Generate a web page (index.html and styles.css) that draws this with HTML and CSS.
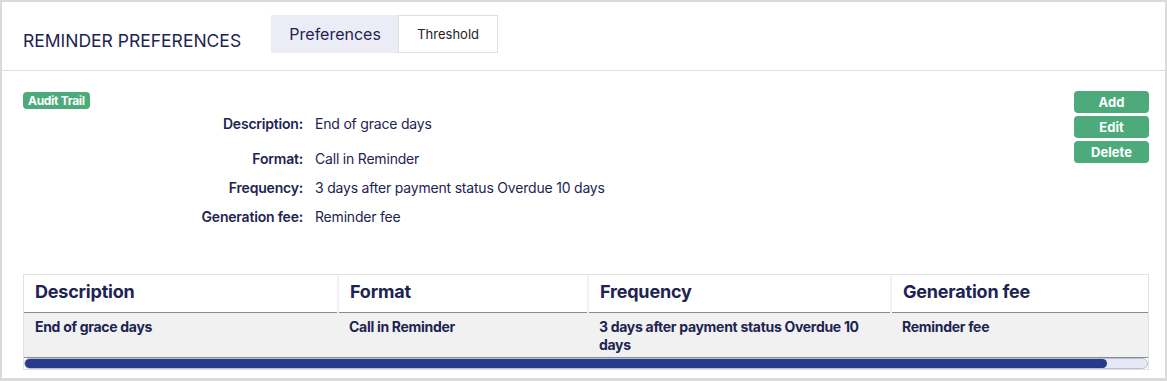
FILE: index.html
```html
<!DOCTYPE html>
<html lang="en">
<head>
    <meta charset="UTF-8">
    <meta name="viewport" content="width=device-width, initial-scale=1.0">
    <title>Reminder Preferences</title>
    <link rel="stylesheet" href="styles.css">
</head>
<body>
    <div class="panel">
        <div class="panel-header">
            <h2 class="panel-title">REMINDER PREFERENCES</h2>
            <div class="tabs">
                <div class="tab tab-active">Preferences</div>
                <div class="tab tab-small">Threshold</div>
            </div>
        </div>

        <div class="panel-body">
            <div class="top-row">
                <div class="details">
                    <span class="badge">Audit Trail</span>
                    <div class="detail-list">
                        <div class="detail-row first">
                            <span class="detail-label">Description:</span>
                            <span class="detail-value">End of grace days</span>
                        </div>
                        <div class="detail-row">
                            <span class="detail-label">Format:</span>
                            <span class="detail-value">Call in Reminder</span>
                        </div>
                        <div class="detail-row">
                            <span class="detail-label">Frequency:</span>
                            <span class="detail-value">3 days after payment status Overdue 10 days</span>
                        </div>
                        <div class="detail-row">
                            <span class="detail-label">Generation fee:</span>
                            <span class="detail-value">Reminder fee</span>
                        </div>
                    </div>
                </div>
                <div class="actions">
                    <button class="btn">Add</button>
                    <button class="btn">Edit</button>
                    <button class="btn">Delete</button>
                </div>
            </div>

            <div class="table-wrap">
                <table class="grid">
                    <thead>
                        <tr>
                            <th class="col-desc">Description</th>
                            <th class="col-format">Format</th>
                            <th class="col-freq">Frequency</th>
                            <th class="col-fee">Generation fee</th>
                        </tr>
                    </thead>
                    <tbody>
                        <tr>
                            <td>End of grace days</td>
                            <td>Call in Reminder</td>
                            <td>3 days after payment status Overdue 10 days</td>
                            <td>Reminder fee</td>
                        </tr>
                    </tbody>
                </table>
                <div class="scrollbar">
                    <div class="scroll-thumb"></div>
                </div>
            </div>
        </div>
    </div>
</body>
</html>
```

FILE: styles.css
```css
* {
    box-sizing: border-box;
}
body {
    margin: 0;
    font-family: Inter, "Noto Sans", Arial, sans-serif;
    color: #1d2451;
    background-color: white;
}
.panel {
    width: 1167px;
    height: 381px;
    border: 2px solid #dadada;
    border-bottom-width: 3px;
    background-color: white;
}
.panel-header {
    display: flex;
    align-items: flex-start;
    height: 69px;
    padding: 0 21px;
    border-bottom: 1px solid #dddddd;
}
.panel-title {
    margin: 29px 0 0 0;
    font-size: 17.5px;
    font-weight: 400;
    line-height: 20px;
    letter-spacing: 0;
}
.tabs {
    display: flex;
    margin: 13px 0 0 30px;
}
.tab {
    height: 38px;
    display: flex;
    align-items: center;
    justify-content: center;
    border: 1px solid #dedede;
    font-size: 16px;
    background-color: white;
}
.tab-active {
    width: 127px;
    background-color: #ebecf5;
    border-right: none;
    border-color: #ebecf5;
}
.tab-small {
    width: 100px;
    font-size: 13px;
    color: #222;
}
.panel-body {
    padding: 20px 16px 0 21px;
}
.top-row {
    display: flex;
    justify-content: space-between;
}
.badge {
    display: block;
    width: fit-content;
    margin-top: 1px;
    height: 17px;
    line-height: 17px;
    padding: 0 5px;
    border-radius: 4px;
    background-color: #4caa7b;
    color: white;
    font-size: 12px;
    font-weight: 700;
    letter-spacing: -0.3px;
}
.detail-row {
    display: flex;
    height: 29px;
    align-items: center;
    font-size: 14px;
}
.detail-row.first {
    margin-bottom: 6px;
}
.detail-label {
    width: 280px;
    text-align: right;
    font-weight: 600;
    letter-spacing: -0.2px;
}
.detail-value {
    margin-left: 12px;
    letter-spacing: -0.2px;
}
.actions {
    display: flex;
    flex-direction: column;
    gap: 3px;
}
.btn {
    width: 75px;
    height: 22px;
    padding: 0;
    border: none;
    border-radius: 4px;
    background-color: #4caa7b;
    color: white;
    font-family: inherit;
    font-size: 13px;
    font-weight: 700;
}
.table-wrap {
    margin-top: 43px;
    width: 1126px;
    border: 1px solid #e2e2e2;
}
.grid {
    width: 100%;
    border-collapse: collapse;
    table-layout: fixed;
}
.grid th {
    height: 37px;
    padding: 0 11px 3px 11px;
    text-align: left;
    font-size: 18px;
    font-weight: 700;
    border-right: 2px solid #f2f2f2;
    border-bottom: 1px solid #8a8a8a;
    letter-spacing: -0.2px;
}
.grid th:last-child {
    border-right: none;
}
.col-desc { width: 314px; }
.col-format { width: 250px; }
.col-freq { width: 303px; }
.grid td {
    height: 45px;
    padding: 5px 11px 0 11px;
    vertical-align: top;
    font-size: 14px;
    font-weight: 700;
    line-height: 18px;
    background-color: #f1f1f1;
    border-bottom: 1px solid #8a8a8a;
    letter-spacing: -0.3px;
}
.scrollbar {
    height: 11px;
    border: 1px solid #b9bfd8;
    border-radius: 6px;
    background-color: #e6e9f5;
}
.scroll-thumb {
    width: 1082px;
    height: 100%;
    border-radius: 6px;
    background-color: #283a8a;
}
```
